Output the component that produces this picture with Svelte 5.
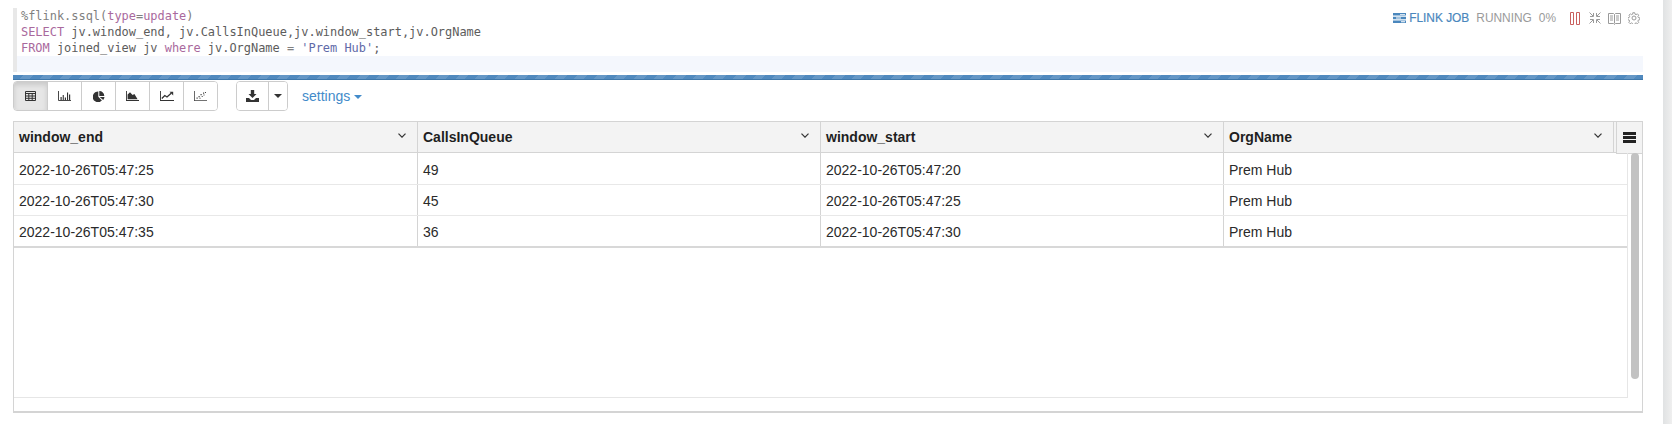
<script>
  const columns = [
    { name: 'window_end', width: 404 },
    { name: 'CallsInQueue', width: 403 },
    { name: 'window_start', width: 403 },
    { name: 'OrgName', width: 390 }
  ];
  const rows = [
    ['2022-10-26T05:47:25', '49', '2022-10-26T05:47:20', 'Prem Hub'],
    ['2022-10-26T05:47:30', '45', '2022-10-26T05:47:25', 'Prem Hub'],
    ['2022-10-26T05:47:35', '36', '2022-10-26T05:47:30', 'Prem Hub']
  ];
</script>

<div class="page">
  <main class="paragraph">
    <section class="editor">
      <div class="line"><span class="dim">%flink.ssql(</span><span class="kw">type</span><span class="dim">=</span><span class="kw">update</span><span class="dim">)</span></div>
      <div class="line"><span class="kw">SELECT</span> jv.window_end, jv.CallsInQueue,jv.window_start,jv.OrgName</div>
      <div class="line"><span class="kw">FROM</span> joined_view jv <span class="kw">where</span> jv.OrgName <span class="dim">=</span> <span class="str">'Prem Hub'</span>;</div>
      <div class="line active"></div>
      <div class="status">
        <span class="job">
          <svg width="13" height="10" viewBox="0 0 13 10"><path fill="#4a87bd" d="M0 0h13v2.600H0zM0 3.700h13v2.600H0zM0 7.400h13V10H0z"/><path fill="#fff" d="M7 .9h5v.9H7zM3 4.600h5v.9H3zM8 8.300h4v.9H8z"/></svg>
          FLINK JOB
        </span>
        <span class="state">RUNNING</span>
        <span class="state">0%</span>
        <span class="icons">
          <svg width="10" height="13" viewBox="0 0 10 13"><path fill="none" stroke="#c9605e" d="M.5.500h3v12h-3zM6.500.500h3v12h-3z"/></svg>
          <svg class="gap1" width="12" height="12" viewBox="0 0 12 12"><path fill="none" stroke="#9a9a9a" d="M.5.500L4 4M4.500 1v3.500H1M11.500.5L8 4M7.500 1v3.500H11M.5 11.500L4 8M4.500 11V7.500H1M11.500 11.500L8 8M7.500 11V7.500H11"/></svg>
          <svg class="gap2" width="13" height="13" viewBox="0 0 13 13"><path fill="none" stroke="#9a9a9a" d="M.5 1.500h5l1 1 1-1h5v10h-5l-1 1-1-1h-5zM6.500 2.500v9M2 4h3M2 6h3M2 8h3M8 4h3M8 6h3M8 8h3"/></svg>
          <svg class="gap2" width="12" height="12" viewBox="0 0 24 24"><path fill="none" stroke="#9a9a9a" stroke-width="2" d="M10 1h4l.6 3 2.300 1 2.600-1.700 2.800 2.800-1.700 2.600 1 2.300 3 .6v4l-3 .6-1 2.300 1.700 2.600-2.800 2.800-2.600-1.700-2.300 1-.6 3h-4l-.6-3-2.300-1-2.600 1.700-2.800-2.800 1.700-2.600-1-2.300-3-.6v-4l3-.6 1-2.300L2.100 6.100l2.800-2.800 2.600 1.700 2.300-1z" transform="translate(0 .5) scale(.96)"/><circle cx="12" cy="12" r="4" fill="none" stroke="#9a9a9a" stroke-width="2"/></svg>
        </span>
      </div>
    </section>

    <div class="progress"></div>

    <nav class="toolbar">
      <div class="group charts">
        <button class="btn on" aria-label="table">
          <svg width="11" height="10" viewBox="0 0 11 10"><path fill="none" stroke="#333" d="M.5.500h10v9H.5zM.5 2.500h10M.5 5h10M.5 7.300h10M3.800 2.500v7M7.200 2.500v7"/></svg>
        </button>
        <button class="btn" aria-label="bar chart">
          <svg width="13" height="10" viewBox="0 0 13 10"><path fill="none" stroke="#333" stroke-width=".9" d="M.5 0v9.500H13"/><path fill="#333" d="M2.500 6h1.200v3H2.500zM4.700 4h1.100v5H4.700zM6.800 6.500H8V9H6.800zM9 1.500h1.100V9H9zM11 3.500h1.200V9H11z"/></svg>
        </button>
        <button class="btn" aria-label="pie chart">
          <svg width="12" height="11" viewBox="0 0 12 11"><path fill="#333" d="M5.300 .6v5.200l3.600 3.700A5.300 5.300 0 1 1 5.300 .6zM6.300 0a5 5 0 0 1 5 5h-5zM6.700 6h4.800a5 5 0 0 1-1.300 2.900z"/></svg>
        </button>
        <button class="btn" aria-label="area chart">
          <svg width="13" height="10" viewBox="0 0 13 10"><path fill="#333" d="M0 0h.9v8.900H13V10H0z"/><path fill="#333" d="M1.600 8.200V3.500l2.400-2.300 2.600 2.800 1.800-1 3.200 5.200z"/></svg>
        </button>
        <button class="btn" aria-label="line chart">
          <svg width="14" height="10" viewBox="0 0 14 10"><path fill="#333" d="M0 0h.9v8.900H14V10H0z"/><path fill="none" stroke="#333" stroke-width="1.300" d="M1.800 7.500l3-3 2.200 1.500 4.200-3.800"/><path fill="#333" d="M9.500 .8h3.700v3.600z"/></svg>
        </button>
        <button class="btn" aria-label="scatter chart">
          <svg width="13" height="10" viewBox="0 0 13 10"><path fill="#444" d="M0 0h.8v9.200H13v.8H0z"/><path fill="#444" d="M2.500 6.500h1.200v1.200h-1.200zM4.500 5h1.200v1.200H4.500zM5.500 6.800h1v1h-1zM6.500 3h1.200v1.200H6.500zM7.700 5h1v1h-1zM9 1.500h1.200v1.200H9zM9.500 3.500h1v1h-1zM11 1h1v1h-1z"/></svg>
        </button>
      </div>
      <div class="group download">
        <button class="btn dl" aria-label="download">
          <svg width="13" height="12" viewBox="0 0 13 12"><path fill="#333" d="M4.800 0h3.400v4h2.300L6.500 8 2.500 4h2.300zM0 8h3l2 2h3l2-2h3v4H0z"/></svg>
        </button>
        <button class="btn caret" aria-label="more"><i class="tri dark"></i></button>
      </div>
      <a class="settings" href="#settings">settings <i class="tri blue"></i></a>
    </nav>

    <section class="grid">
      <div class="head">
        {#each columns as c}
          <div class="hcell" style="width:{c.width}px">
            <span>{c.name}</span>
            <svg width="8" height="5" viewBox="0 0 8 5"><path fill="none" stroke="#333" stroke-width="1.200" d="M.5.700L4 4.200 7.500.7"/></svg>
          </div>
        {/each}
        <button class="menu" aria-label="grid menu"><i></i><i></i><i></i></button>
      </div>
      <div class="body">
        <div class="rows">
          {#each rows as r}
            <div class="row">
              {#each r as v, i}
                <div class="cell" style="width:{columns[i].width}px">{v}</div>
              {/each}
            </div>
          {/each}
        </div>
        <div class="thumb"></div>
      </div>
    </section>
  </main>
  <aside class="edge"></aside>
</div>

<style>
  :global(body) { margin: 0; background: #fff; }
  .page {
    display: flex;
    justify-content: space-between;
    width: 1672px;
    height: 424px;
    overflow: hidden;
    font-family: "Liberation Sans", Arial, sans-serif;
  }
  .paragraph { width: 1630px; margin-left: 13px; padding-top: 8px; box-sizing: border-box; }
  .edge { width: 9px; background: linear-gradient(90deg, #e0e2e3, #efefef); }

  .editor {
    position: relative;
    border-left: 4px solid #e8e8e8;
    font-family: "DejaVu Sans Mono", monospace;
    font-size: 11.95px;
    color: #5c5c5c;
  }
  .line { height: 16px; line-height: 16px; padding-left: 4px; white-space: pre; }
  .active { background: #f4f7fd; }
  .kw { color: #a9699d; }
  .dim { color: #808080; }
  .str { color: #5f6aa8; }

  .status {
    position: absolute;
    top: 3px;
    right: 3px;
    display: flex;
    align-items: center;
    height: 14px;
    font-family: "Liberation Sans", Arial, sans-serif;
    font-size: 11.9px;
    color: #9a9a9a;
  }
  .job { display: flex; align-items: center; gap: 3px; color: #4a87bd; margin-right: 7px; -webkit-text-stroke: .2px #4a87bd; }
  .state { margin-right: 7px; }
  .icons { display: flex; align-items: center; margin-left: 7px; }
  .gap1 { margin-left: 9px; }
  .gap2 { margin-left: 7px; }

  .progress {
    height: 5px;
    margin-top: 3px;
    background-color: #5089be;
    background-image: repeating-linear-gradient(-45deg, transparent 0 7px, rgba(255,255,255,.12) 7px 14px);
    border-bottom: 1px solid #3f78ab;
    box-sizing: border-box;
  }

  .toolbar { display: flex; align-items: center; height: 30px; margin-top: 1px; }
  .group { display: flex; height: 30px; box-sizing: border-box; border: 1px solid #ccc; border-radius: 4px; overflow: hidden; }
  .charts { width: 205px; }
  .download { width: 52px; margin-left: 18px; }
  .btn {
    display: flex;
    align-items: center;
    justify-content: center;
    flex: 1;
    padding: 0;
    border: 0;
    border-left: 1px solid #ccc;
    background: #fff;
  }
  .btn:first-child { border-left: 0; }
  .btn.on { background: #e6e6e6; box-shadow: inset 0 3px 5px rgba(0,0,0,.125); }
  .dl { flex: 0 0 31px; }
  .tri { display: inline-block; width: 0; height: 0; border-left: 4px solid transparent; border-right: 4px solid transparent; }
  .tri.dark { border-top: 4px solid #333; }
  .tri.blue { border-top: 4px solid #428bca; vertical-align: 2px; }
  .settings { margin-left: 14px; color: #428bca; font-size: 14px; text-decoration: none; }

  .grid {
    height: 292px;
    margin-top: 10px;
    width: 1630px;
    box-sizing: border-box;
    border: 1px solid #d4d4d4;
    border-width: 1px 1px 2px 1px;
    font-size: 14px;
    color: #222;
  }
  .head { position: relative; display: flex; height: 30px; background: #f3f3f3; border-bottom: 1px solid #d4d4d4; }
  .hcell {
    display: flex;
    align-items: center;
    justify-content: space-between;
    box-sizing: border-box;
    padding: 0 11px 0 5px;
    border-right: 1px solid #d4d4d4;
    font-weight: 700;
    color: #1f1f1f;
  }
  .hcell svg { margin-top: -3px; }
  .menu {
    position: absolute;
    top: -1px;
    right: -1px;
    display: flex;
    flex-direction: column;
    align-items: center;
    justify-content: center;
    gap: 1px;
    width: 27px;
    height: 33px;
    padding: 0;
    background: #f3f3f3;
    border: 1px solid #d4d4d4;
    box-sizing: border-box;
  }
  .menu i { display: block; width: 13px; height: 3px; background: #222; }

  .body { position: relative; width: 1614px; height: 245px; box-sizing: border-box; border-right: 1px solid #e6e6e6; border-bottom: 1px solid #e6e6e6; }
  .rows { border-bottom: 2px solid #d8d8d8; }
  .row { display: flex; height: 31px; box-sizing: border-box; border-bottom: 1px solid #e8e8e8; }
  .row:first-child { height: 32px; }
  .row:last-child { height: 30px; border-bottom: 0; }
  .cell {
    display: flex;
    align-items: center;
    box-sizing: border-box;
    padding: 2px 0 0 5px;
    border-right: 1px solid #d4d4d4;
    font-size: 14px;
    color: #2a2a2a;
  }
  .cell:last-child { border-right: 0; }
  .thumb { position: absolute; top: 0; left: 1617px; width: 8px; height: 226px; border-radius: 4px; background: #c2c2c2; }
</style>
